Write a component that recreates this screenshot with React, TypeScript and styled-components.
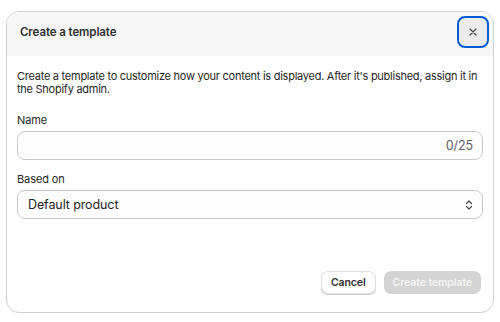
import React from "react";
import styled, { createGlobalStyle } from "styled-components";

const Global = createGlobalStyle`
  html, body { margin: 0; padding: 0; background: #ffffff; }
  body { font-family: Inter, "Noto Sans", sans-serif; color: #303030; }
  * { box-sizing: border-box; }
`;

const Page = styled.div`
  width: 500px;
  height: 322px;
  padding: 11px 6px 0 6px;
`;

const Dialog = styled.div`
  width: 488px;
  height: 302px;
  border: 1px solid #cfcfcf;
  border-radius: 13px;
  overflow: hidden;
  display: flex;
  flex-direction: column;
  background: #ffffff;
`;

const Header = styled.div`
  height: 44px;
  background: #f7f7f7;
  display: flex;
  align-items: flex-start;
  justify-content: space-between;
  padding: 4px 4px 0 13px;
`;

const Title = styled.h2`
  margin: 0;
  font-size: 11.5px;
  font-weight: 600;
  letter-spacing: -0.1px;
  line-height: 32px;
  color: #303030;
`;

const CloseButton = styled.button`
  width: 32px;
  height: 32px;
  border: 2px solid #005bd3;
  border-radius: 8px;
  background: #ebebeb;
  display: flex;
  align-items: center;
  justify-content: center;
  padding: 0;
  color: #4a4a4a;
`;

const Body = styled.div`
  padding: 14px 10px 0 10px;
  display: flex;
  flex-direction: column;
`;

const Paragraph = styled.p`
  margin: 0 0 18px 0;
  font-size: 11px;
  letter-spacing: -0.26px;
  line-height: 13px;
  color: #262626;
`;

const Label = styled.label`
  display: block;
  font-size: 11px;
  letter-spacing: -0.1px;
  line-height: 13px;
  margin-bottom: 4px;
  color: #262626;
`;

const Field = styled.div<{ $last?: boolean }>`
  margin-bottom: ${(p) => (p.$last ? 0 : "13px")};
`;

const InputBox = styled.div`
  height: 29px;
  border: 1px solid #c9c9c9;
  border-radius: 8px;
  background: #fdfdfd;
  display: flex;
  align-items: center;
  justify-content: space-between;
  padding: 0 9px 0 10px;
  font-size: 12.5px;
  letter-spacing: -0.1px;
`;

const Counter = styled.span`
  color: #616161;
`;

const SelectValue = styled.span`
  color: #262626;
`;

const Footer = styled.div`
  margin-top: auto;
  display: flex;
  justify-content: flex-end;
  gap: 8px;
  padding: 0 12px 18px 0;
`;

const Button = styled.button<{ $primary?: boolean }>`
  height: 23px;
  border-radius: 7px;
  padding: 0 9px;
  font-family: Inter, "Noto Sans", sans-serif;
  font-size: 10.5px;
  letter-spacing: -0.1px;
  font-weight: 600;
  border: ${(p) => (p.$primary ? "none" : "1px solid #dedede")};
  background: ${(p) => (p.$primary ? "#d4d4d4" : "#ffffff")};
  color: ${(p) => (p.$primary ? "#f3f3f3" : "#303030")};
  box-shadow: ${(p) => (p.$primary ? "none" : "0 1px 0 #cccccc")};
`;

export default function App() {
  return (
    <>
      <Global />
      <Page>
        <Dialog>
          <Header>
            <Title>Create a template</Title>
            <CloseButton aria-label="Close">
              <svg width="8" height="8" viewBox="0 0 8 8">
                <path d="M1 1L7 7M7 1L1 7" stroke="currentColor" strokeWidth="1.2" strokeLinecap="round" />
              </svg>
            </CloseButton>
          </Header>
          <Body>
            <Paragraph>
              Create a template to customize how your content is displayed. After it's published, assign it in the Shopify admin.
            </Paragraph>
            <Field>
              <Label>Name</Label>
              <InputBox>
                <span />
                <Counter>0/25</Counter>
              </InputBox>
            </Field>
            <Field $last>
              <Label>Based on</Label>
              <InputBox>
                <SelectValue>Default product</SelectValue>
                <svg width="8" height="12" viewBox="0 0 8 12">
                  <path d="M1.5 4.5L4 2L6.5 4.5M1.5 7.5L4 10L6.5 7.5" fill="none" stroke="#4a4a4a" strokeWidth="1.2" strokeLinecap="round" strokeLinejoin="round" />
                </svg>
              </InputBox>
            </Field>
          </Body>
          <Footer>
            <Button>Cancel</Button>
            <Button $primary>Create template</Button>
          </Footer>
        </Dialog>
      </Page>
    </>
  );
}
